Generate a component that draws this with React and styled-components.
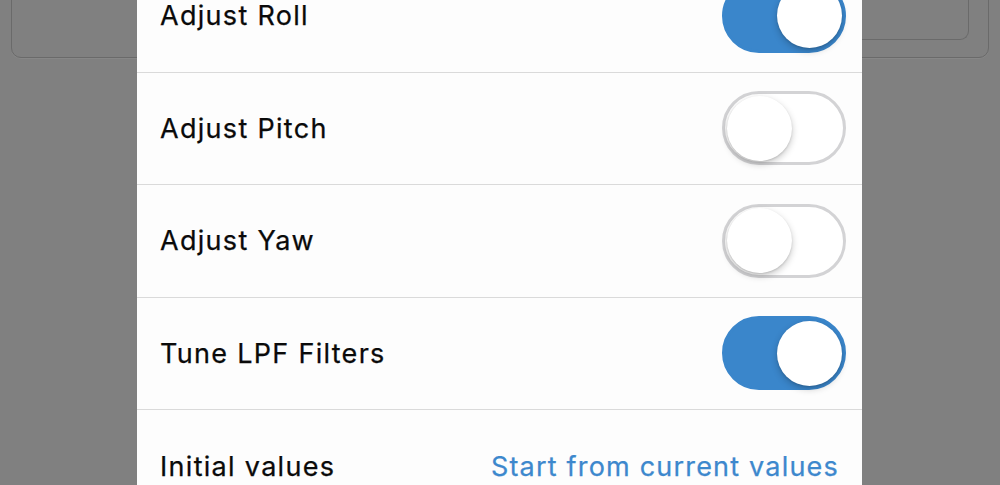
import React from "react";
import styled, { createGlobalStyle } from "styled-components";

const Global = createGlobalStyle`
  html, body { margin: 0; padding: 0; }
  body { background: #808080; font-family: Inter, "Noto Sans", sans-serif; }
`;

const Screen = styled.div`
  position: relative;
  width: 1000px;
  height: 485px;
  overflow: hidden;
  background: #808080;
`;

const Page = styled.div`
  padding: 0 11px;
`;

const OuterCard = styled.div`
  margin-top: -40px;
  height: 96px;
  border: 1.5px solid #6a6a6a;
  border-radius: 10px;
  box-shadow: 0 1px 0 rgba(255,255,255,0.06);
  display: flex;
  justify-content: flex-end;
  padding-right: 19px;
`;

const InnerCard = styled.div`
  width: 420px;
  height: 78px;
  border: 1.5px solid #6a6a6a;
  border-top: none;
  border-radius: 0 0 9px 9px;
`;

const Sheet = styled.div`
  position: absolute;
  left: 137px;
  top: -40px;
  width: 725px;
  background: #fdfdfd;
  display: flex;
  flex-direction: column;
`;

const Row = styled.div`
  height: 112.5px;
  box-sizing: border-box;
  display: flex;
  align-items: center;
  justify-content: space-between;
  padding: 0 ${(p) => p.$pr || 16}px 0 23px;
  border-bottom: ${(p) => (p.$last ? "none" : "1px solid #dadada")};
`;

const Label = styled.span`
  font-size: 27px;
  line-height: 34px;
  padding-top: 1px;
  color: #0a0a0a;
  letter-spacing: 1.3px;
  -webkit-text-stroke: 0.25px #0a0a0a;
`;

const Link = styled.span`
  font-size: 27px;
  line-height: 34px;
  padding-top: 1px;
  color: #3d88cd;
  letter-spacing: 1.2px;
  -webkit-text-stroke: 0.25px #3d88cd;
`;

const Track = styled.div`
  position: relative;
  width: 124px;
  height: 74px;
  box-sizing: border-box;
  border-radius: 37px;
  background: ${(p) => (p.$on ? "#3a86cb" : "#ffffff")};
  border: 3px solid ${(p) => (p.$on ? "#3a86cb" : "#d3d3d5")};
`;

const Knob = styled.div`
  position: absolute;
  top: 1.5px;
  ${(p) => (p.$on ? "right: 1.5px;" : "left: 1.5px;")}
  width: 65px;
  height: 65px;
  border-radius: 50%;
  background: #fff;
  box-shadow: 0 3px 7px rgba(0, 0, 0, 0.22), 0 1px 2px rgba(0, 0, 0, 0.12);
`;

const Toggle = ({ on }) => (
  <Track $on={on}>
    <Knob $on={on} />
  </Track>
);

const items = [
  { label: "Adjust Roll", on: true },
  { label: "Adjust Pitch", on: false },
  { label: "Adjust Yaw", on: false },
  { label: "Tune LPF Filters", on: true },
];

export default function App() {
  return (
    <>
      <Global />
      <Screen>
        <Page>
          <OuterCard>
            <InnerCard />
          </OuterCard>
        </Page>
        <Sheet>
          {items.map((it) => (
            <Row key={it.label}>
              <Label>{it.label}</Label>
              <Toggle on={it.on} />
            </Row>
          ))}
          <Row $last $pr={23}>
            <Label>Initial values</Label>
            <Link>Start from current values</Link>
          </Row>
        </Sheet>
      </Screen>
    </>
  );
}
